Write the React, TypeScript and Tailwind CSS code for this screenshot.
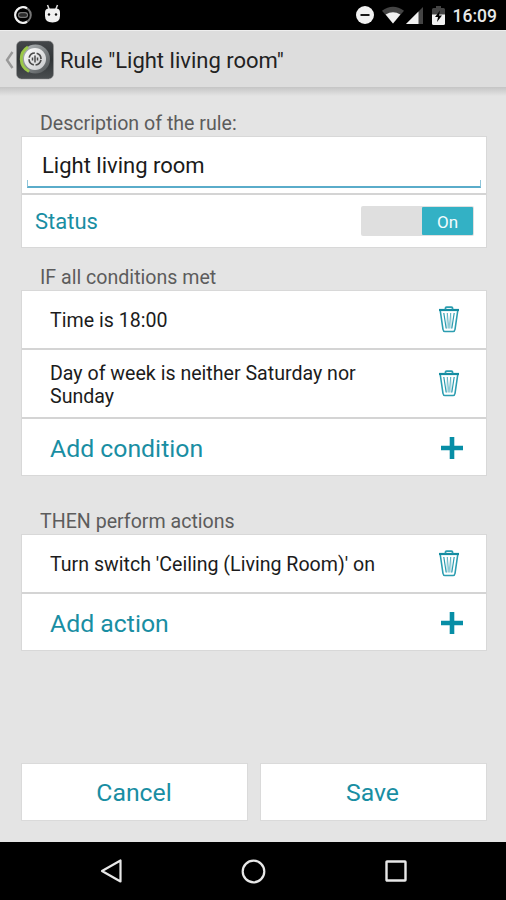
import { useState, type ReactNode } from "react";

function StatusBar() {
  return (
    <div className="flex h-[30px] shrink-0 items-center bg-black pl-[14px] pr-[9px] text-white">
      <svg width="18" height="18" viewBox="0 0 18 18" fill="none">
        <circle cx="9" cy="9" r="7.8" stroke="#777" strokeWidth="2" />
        <path d="M13 2.3A7.8 7.8 0 1 0 13 15.7" stroke="#f2f2f2" strokeWidth="2.2" />
        <rect x="4.6" y="6.8" width="8.8" height="4.4" rx="2.2" stroke="#777" strokeWidth="1.4" />
        <path d="M6 9h6" stroke="#555" />
      </svg>
      <svg className="ml-[12px] mb-[2px]" width="17" height="20" viewBox="0 0 17 20">
        <path d="M3.500 1 5.500 6M13.500 1 11.500 6" stroke="#ddd" strokeWidth="1.500" />
        <path
          d="M1 8.500Q1 4.500 5 4.500h7Q16 4.500 16 8.500V12Q16 18.500 8.500 18.500Q1 18.500 1 12Z"
          fill="#f0f0f0"
        />
        <circle cx="5" cy="10.500" r="1.200" fill="#111" />
        <circle cx="12" cy="10.500" r="1.200" fill="#111" />
      </svg>
      <div className="flex-1" />
      <svg width="18" height="18" viewBox="0 0 18 18">
        <circle cx="9" cy="9" r="9" fill="#f2f2f2" />
        <path d="M4.500 9h9" stroke="#000" strokeWidth="1.800" />
      </svg>
      <svg className="ml-[8px]" width="22" height="18" viewBox="0 0 23 18">
        <path d="M0 4.500Q11.500-3.500 23 4.500L11.500 18Z" fill="#444" />
        <path d="M3.800 8.500Q11.500 3.500 19.200 8.500L11.500 18Z" fill="#f2f2f2" />
      </svg>
      <svg className="ml-px" width="19" height="18" viewBox="0 0 19 18">
        <path d="M1 18 18 1V18Z" fill="#444" />
        <path d="M1 18 13.500 5.500V18Z" fill="#f2f2f2" />
      </svg>
      <svg className="ml-[8px]" width="13" height="19" viewBox="0 0 13 19">
        <path d="M0 3.500Q0 2 1.500 2H4V0h5v2h2.500Q13 2 13 3.500V10H0Z" fill="#444" />
        <path d="M0 8.500h13V17.500Q13 19 11.500 19h-10Q0 19 0 17.500Z" fill="#f2f2f2" />
        <path d="M8 4.500 3 11h3l-1 5 5-6.500H7Z" fill="#000" />
      </svg>
      <span className="ml-[8px] pt-[2px] text-[17.500px] font-medium leading-[30px] text-[#e8e8e8]">
        16:09
      </span>
    </div>
  );
}

function AppIcon() {
  return (
    <svg width="38" height="40" viewBox="0 0 38 40" fill="none">
      <defs>
        <linearGradient id="tile" x1="0" y1="0" x2="0" y2="1">
          <stop offset="0" stopColor="#44474a" />
          <stop offset="0.500" stopColor="#303436" />
          <stop offset="1" stopColor="#4a4e50" />
        </linearGradient>
        <linearGradient id="rim" x1="0" y1="0" x2="1" y2="1">
          <stop offset="0" stopColor="#b9bec0" />
          <stop offset="1" stopColor="#4c5052" />
        </linearGradient>
        <linearGradient id="knob" x1="0" y1="0" x2="1" y2="1">
          <stop offset="0" stopColor="#fff" />
          <stop offset="1" stopColor="#c6c8ca" />
        </linearGradient>
      </defs>
      <rect x="0.500" y="1" width="37" height="38" rx="5" fill="url(#tile)" stroke="#999" strokeOpacity="0.500" />
      <circle cx="19.500" cy="19" r="14.500" fill="url(#rim)" />
      <path d="M13 31.500A14 14 0 0 1 12 7" stroke="#9bc84a" strokeWidth="3" />
      <circle cx="19" cy="19" r="11" fill="url(#knob)" />
      <circle cx="19" cy="19" r="6" stroke="#4a4a4a" strokeWidth="1.700" strokeDasharray="7.600 1.825" strokeDashoffset="-1" />
      <path d="M19 15.500v7M16.500 17.500v3M21.500 17.500v3" stroke="#4a4a4a" strokeWidth="1.500" />
    </svg>
  );
}

function TrashIcon() {
  return (
    <svg width="22" height="27" viewBox="0 0 22 27" fill="none" stroke="#2b9db0">
      <path d="M1 4h20" stroke="#138ca1" strokeWidth="2.200" />
      <path d="M7.500 3.500V2Q7.500 1.200 8.500 1.200h5Q14.500 1.200 14.500 2V3.500" strokeWidth="1.800" />
      <path
        d="M2.300 5 5 23.500Q5.300 25.500 7 25.500h8Q16.700 25.500 17 23.500L19.700 5"
        strokeWidth="1.600"
      />
      <path d="M5.800 7l2.400 15.500M16.200 7 13.800 22.500" strokeWidth="1.200" />
      <path d="M9.300 7 11 22.500 12.700 7M9.300 7l-.3 15.500M12.700 7l.3 15.500" strokeWidth="0.700" opacity="0.800" />
    </svg>
  );
}

function PlusIcon() {
  return (
    <svg width="22" height="22" viewBox="0 0 22 22">
      <path d="M11 0v22M0 11h22" stroke="#078ea6" strokeWidth="4.600" />
    </svg>
  );
}

function Card({ children }: { children: ReactNode }) {
  return (
    <div className="flex flex-col gap-[2px] border border-[#d8d8d8] bg-[#d4d4d4]">
      {children}
    </div>
  );
}

function Label({ children }: { children: ReactNode }) {
  return <h2 className="pl-[19px] text-[19.600px] leading-6 text-[#5c5c5c]">{children}</h2>;
}

function EntryRow({ text, tall }: { text: string; tall?: boolean }) {
  return (
    <div
      className={`flex items-center justify-between bg-white pl-[28px] pr-[26px] ${tall ? "h-[67px]" : "h-[57px]"}`}
    >
      <p className="w-[340px] pt-[2px] text-[19.600px] leading-[23px] text-[#1c1c1c]">{text}</p>
      <button aria-label="Delete">
        <TrashIcon />
      </button>
    </div>
  );
}

function AddRow({ text }: { text: string }) {
  return (
    <button className="flex h-[56px] items-center justify-between bg-white pl-[28px] pr-[23px] pt-[2px] text-[24.800px] text-[#198ea3]">
      <span className="pt-[2px]">{text}</span>
      <PlusIcon />
    </button>
  );
}

export default function App() {
  const [name, setName] = useState("Light living room");
  const [on, setOn] = useState(true);

  return (
    <div className="flex h-[900px] w-[506px] flex-col overflow-hidden bg-[#e4e4e4] font-['Roboto',sans-serif]">
      <StatusBar />

      {/* Action bar */}
      <header className="flex h-[57px] shrink-0 items-center border-t border-[#eee] bg-[#dddddd] pl-[5px]">
        <svg className="mt-[2px]" width="9" height="18" viewBox="0 0 9 18" fill="none">
          <path d="M7.500 1 2 9l5.500 8" stroke="#999" strokeWidth="2.400" />
        </svg>
        <span className="ml-[2px] pt-[2px]">
          <AppIcon />
        </span>
        <h1 className="ml-[6px] pt-[3px] text-[22px] leading-[54px] text-[#222]">
          Rule "Light living room"
        </h1>
      </header>
      <div className="h-[9px] shrink-0 bg-linear-to-b from-[#c4c4c4] to-[#e4e4e4]" />

      <main className="flex flex-1 flex-col pl-[21px] pr-[19px] pt-[16px]">
        <Label>Description of the rule:</Label>
        <Card>
          <div className="flex h-[56px] flex-col bg-white px-[5px] pb-[5px]">
            <input
              className="h-[43px] shrink-0 bg-transparent pl-[15px] pt-[13px] text-[22px] leading-[30px] text-[#1a1a1a] outline-none"
              value={name}
              onChange={(e) => setName(e.target.value)}
            />
            <div className="h-[8px] border border-b-2 border-t-0 border-[#8fc5da] border-b-[#5aacca]" />
          </div>
          <div className="flex h-[52px] items-center justify-between bg-white pl-[13px] pr-[12px]">
            <span className="text-[22px] text-[#198ea3]">Status</span>
            <button
              className={`flex h-[30px] w-[113px] rounded-[2px] bg-[#dfdfdf] p-px ${on ? "justify-end" : "justify-start"}`}
              onClick={() => setOn(!on)}
            >
              <span className="flex h-full w-[51px] items-center justify-center rounded-[1px] bg-[#33b1c5] pt-[3px] text-[17px] text-[#f4fcfd]">
                {on ? "On" : "Off"}
              </span>
            </button>
          </div>
        </Card>

        <div className="mt-[18px]">
          <Label>IF all conditions met</Label>
          <Card>
            <EntryRow text="Time is 18:00" />
            <EntryRow text="Day of week is neither Saturday nor Sunday" tall />
            <AddRow text="Add condition" />
          </Card>
        </div>

        <div className="mt-[34px]">
          <Label>THEN perform actions</Label>
          <Card>
            <EntryRow text="Turn switch 'Ceiling (Living Room)' on" />
            <AddRow text="Add action" />
          </Card>
        </div>

        <div className="mt-auto mb-[21px] grid grid-cols-2 gap-[12px] text-[24.800px] text-[#198ea3]">
          <button className="h-[58px] border border-[#dadada] bg-white pr-[1px] pt-[2px]">Cancel</button>
          <button className="h-[58px] border border-[#dadada] bg-white pr-[2px] pt-[2px]">Save</button>
        </div>
      </main>

      {/* Navigation bar */}
      <nav className="flex h-[58px] shrink-0 items-center bg-black pl-[100px]">
        <svg width="22" height="24" viewBox="0 0 22 24" fill="none">
          <path d="M20.500 1.500v21L2 12Z" stroke="#e8e8e8" strokeWidth="2.200" strokeLinejoin="round" />
        </svg>
        <svg className="ml-[119px]" width="25" height="25" viewBox="0 0 25 25" fill="none">
          <circle cx="12.500" cy="12.500" r="10.800" stroke="#e8e8e8" strokeWidth="2.200" />
        </svg>
        <svg className="ml-[119px]" width="22" height="22" viewBox="0 0 22 22" fill="none">
          <rect x="1.500" y="1.500" width="19" height="19" rx="0.500" stroke="#e8e8e8" strokeWidth="2.400" />
        </svg>
      </nav>
    </div>
  );
}
